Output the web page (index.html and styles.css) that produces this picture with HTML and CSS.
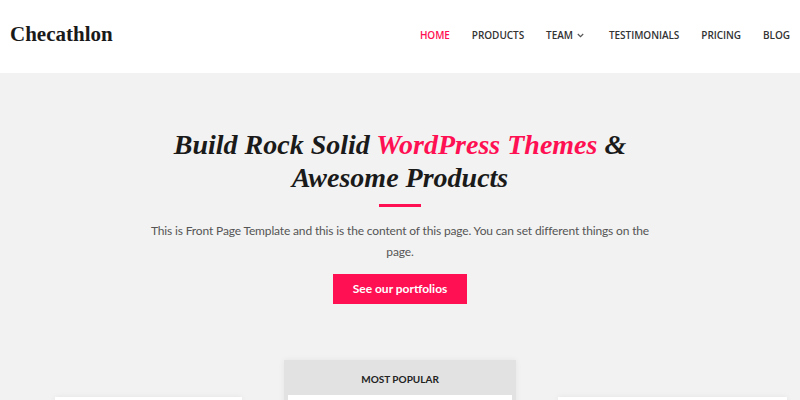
FILE: index.html
```html
<!DOCTYPE html>
<html lang="en">
<head>
  <meta charset="UTF-8">
  <meta name="viewport" content="width=device-width, initial-scale=1.0">
  <title>Checathlon</title>
  <link rel="stylesheet" href="styles.css">
</head>
<body>

  <header class="site-header">
    <div class="site-title">Checathlon</div>
    <nav class="main-nav">
      <a class="nav-link current" href="#">Home</a>
      <a class="nav-link" href="#">Products</a>
      <a class="nav-link has-sub" href="#">Team
        <svg class="chevron" width="7" height="5" viewBox="0 0 7 5"><path d="M0.8 1 L3.5 3.7 L6.2 1" fill="none" stroke="#555" stroke-width="1.2"/></svg>
      </a>
      <a class="nav-link" href="#">Testimonials</a>
      <a class="nav-link" href="#">Pricing</a>
      <a class="nav-link" href="#">Blog</a>
    </nav>
  </header>

  <main class="front-page">
    <section class="hero">
      <h1 class="hero-title">Build Rock Solid <span class="accent">WordPress Themes</span> &amp;<br>Awesome Products</h1>
      <div class="hero-line"></div>
      <p class="hero-text">This is Front Page Template and this is the content of this page. You can set different things on the page.</p>
      <a class="button" href="#">See our portfolios</a>
    </section>

    <section class="pricing">
      <div class="plan plan-left"></div>
      <div class="plan plan-featured">
        <div class="plan-label">Most Popular</div>
        <div class="plan-body"></div>
      </div>
      <div class="plan plan-right"></div>
    </section>
  </main>

</body>
</html>
```

FILE: styles.css
```css
body {
  margin: 0;
  padding: 0;
  font-family: Lato, sans-serif;
  background-color: #f2f2f2;
  color: #555;
  overflow: hidden;
}

.site-header {
  display: flex;
  align-items: center;
  justify-content: space-between;
  height: 73px;
  padding: 0 10px;
  background-color: #fff;
}

.site-title {
  font-family: "Liberation Serif", serif;
  font-weight: bold;
  font-size: 21px;
  color: #1a1a1a;
  margin-top: -4px;
}

.main-nav {
  display: flex;
  align-items: center;
  gap: 22px;
  margin-top: -3px;
}

.nav-link {
  display: flex;
  align-items: center;
  font-family: "Open Sans", sans-serif;
  font-size: 10px;
  font-weight: 600;
  letter-spacing: -0.05px;
  text-transform: uppercase;
  color: #333;
  text-decoration: none;
}

.nav-link.current {
  color: #ff1053;
}

.nav-link.has-sub {
  margin-right: 3px;
}

.chevron {
  margin-left: 4px;
}

.hero {
  display: flex;
  flex-direction: column;
  align-items: center;
  padding-top: 55px;
}

.hero-title {
  margin: 0;
  text-align: center;
  font-family: "Liberation Serif", serif;
  font-style: italic;
  font-weight: bold;
  font-size: 28px;
  line-height: 33px;
  color: #1a1a1a;
}

.accent {
  color: #ff1053;
}

.hero-line {
  width: 42px;
  height: 3px;
  margin-top: 10px;
  background-color: #ff1053;
}

.hero-text {
  margin: 13px 0 0;
  width: 505px;
  text-align: center;
  font-size: 12px;
  letter-spacing: -0.15px;
  line-height: 21px;
  color: #555;
}

.button {
  display: block;
  margin-top: 12px;
  width: 134px;
  height: 30px;
  line-height: 30px;
  text-align: center;
  font-size: 12px;
  font-weight: bold;
  color: #fff;
  background-color: #ff1053;
  text-decoration: none;
}

.pricing {
  display: flex;
  align-items: flex-start;
  padding: 56px 13px 0 55px;
  gap: 42px;
}

.plan {
  background-color: #fff;
  box-shadow: 0 0 6px rgba(0, 0, 0, 0.06);
}

.plan-left {
  width: 187px;
  height: 60px;
  margin-top: 37px;
}

.plan-featured {
  width: 233px;
  background-color: #e2e2e2;
  padding: 0 4px;
  box-sizing: border-box;
}

.plan-label {
  height: 35px;
  line-height: 38px;
  text-align: center;
  font-size: 10px;
  font-weight: bold;
  text-transform: uppercase;
  color: #222;
}

.plan-body {
  height: 60px;
  background-color: #fff;
}

.plan-right {
  width: 229px;
  height: 60px;
  margin-top: 37px;
}
```
